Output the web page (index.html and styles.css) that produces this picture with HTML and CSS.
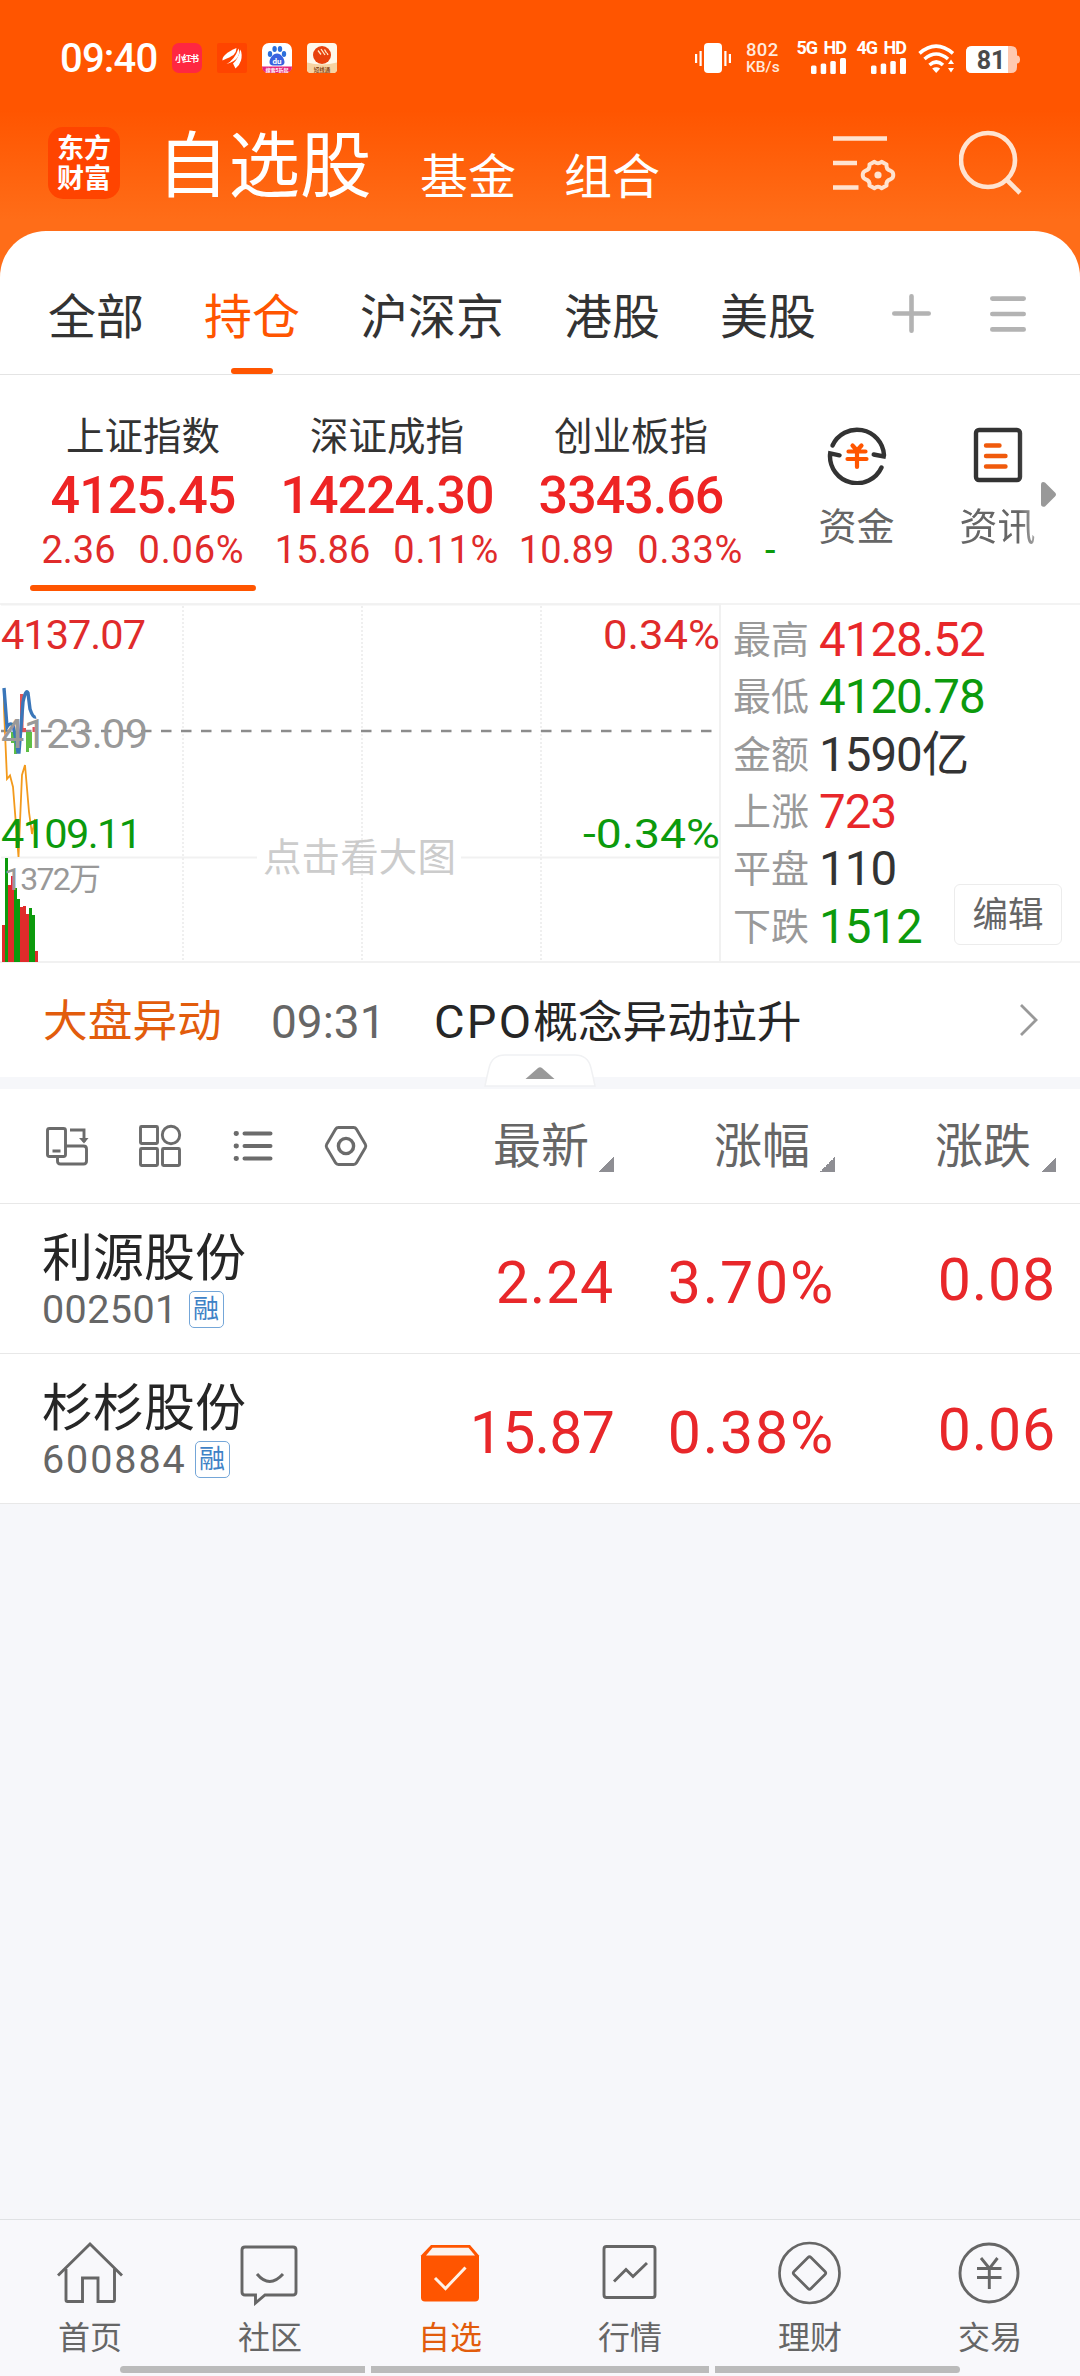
FILE: index.html
```html
<!DOCTYPE html>
<html lang="zh-CN">
<head>
<meta charset="utf-8">
<title>自选股</title>
<link rel="stylesheet" href="styles.css">
</head>
<body>
<div class="app">
  <header class="top">
    <div class="status">
      <span class="clock">09:40</span>
      <svg class="app-icons" width="165" height="30" viewBox="0 0 165 30">
        <rect width="30" height="30" rx="7" fill="#ff2741"/>
        <text x="15" y="19" font-size="9" font-weight="700" fill="#fff" text-anchor="middle" textLength="24">小红书</text>
        <rect x="45" width="30" height="30" rx="2" fill="#ff4400"/>
        <g fill="#fff"><path d="M50.500 17.500q-1-6 14-12.500 0 4-3 7-3 2-11 5.500z"/><path d="M54.500 21q8-4 12-15.500 2 4-1 9-3 4-11 6.500z"/><path d="M63.500 25.500l-2.500-5q5-4 7.500-14 2 5 .500 11-1 4-5.500 8z"/></g>
        <rect x="90" width="30" height="30" rx="7" fill="#fff"/>
        <path d="M90 23.500h30q0 6.500-7 6.500h-16q-7 0-7-6.500z" fill="#e5267a"/>
        <g fill="#2b6fdb"><ellipse cx="98" cy="11" rx="2.200" ry="3"/><ellipse cx="102.600" cy="6" rx="2.200" ry="3"/><ellipse cx="108" cy="6" rx="2.200" ry="3"/><ellipse cx="112" cy="11" rx="2.200" ry="3"/><path d="M105 10.500c4 0 7.500 5 7.500 8.500 0 4-4 3.500-7.500 3.500s-7.500.500-7.500-3.500c0-3.500 3.500-8.500 7.500-8.500z" fill="#3a62e0"/></g>
        <text x="105" y="20.500" font-size="8" font-weight="700" fill="#fff" text-anchor="middle">du</text>
        <text x="105" y="28.800" font-size="5" font-weight="700" fill="#fff" text-anchor="middle" textLength="23">搜索5折起</text>
        <rect x="135" width="30" height="30" rx="4" fill="#fff8ea"/>
        <path d="M135 19.500q15 4 30 0v6.500q0 4-4 4h-22q-4 0-4-4z" fill="#f6d3a2"/>
        <circle cx="150" cy="12" r="9" fill="#e8410c"/>
        <path d="M146 7.500l3 4M149 6l4 6M152.500 6.500l2 3.500M155 10l1 2" stroke="#ffe9c8" stroke-width="1.300" fill="none"/>
        <text x="150" y="28.500" font-size="5.500" font-weight="700" fill="#8a4a1c" text-anchor="middle">短线通</text>
      </svg>
      <div class="status-right">
        <svg class="vib" width="36" height="30" viewBox="0 0 36 30" fill="#fff"><rect x="9" width="18" height="30" rx="4"/><rect y="11" width="2.200" height="9"/><rect x="4.500" y="8" width="2.200" height="15"/><rect x="29.300" y="8" width="2.200" height="15"/><rect x="33.800" y="11" width="2.200" height="9"/></svg>
        <div class="speed"><span class="speed-n">802</span><span class="speed-u">KB/s</span></div>
        <div class="sim"><span class="sim-t">5G HD</span><svg width="35" height="16" viewBox="0 0 35 16" fill="#fff"><rect y="7.500" width="5.500" height="8.500" rx="1.500"/><rect x="9.700" y="5.500" width="5.500" height="10.500" rx="1.500"/><rect x="19.300" y="3" width="5.500" height="13" rx="1.500"/><rect x="29" width="6" height="16" rx="1.500"/></svg></div>
        <div class="sim"><span class="sim-t">4G HD</span><svg width="35" height="16" viewBox="0 0 35 16" fill="#fff"><rect y="7.500" width="5.500" height="8.500" rx="1.500"/><rect x="9.700" y="5.500" width="5.500" height="10.500" rx="1.500"/><rect x="19.300" y="3" width="5.500" height="13" rx="1.500"/><rect x="29" width="6" height="16" rx="1.500"/></svg></div>
        <svg class="wifi" width="37" height="29" viewBox="0 0 37 29" fill="none" stroke="#fff" stroke-width="3.600"><path d="M1.500 9.300q16.500-14.500 33.500 0"/><path d="M6.500 15q11.800-10 23.500 0"/><path d="M11.500 21q6.800-6 13.500 0"/><path d="M18.200 29l-4-4.500q4-2.500 8 0z" fill="#fff" stroke="none"/><path d="M33 15.500l3 4.500h-6zM33 28.500l3-4.500h-6z" fill="#fff" stroke="none"/></svg>
        <svg class="batt" width="54" height="27" viewBox="0 0 54 27"><path d="M6 0h39q6 0 6 6v3.500q3 0 3 4t-3 4v3.500q0 6-6 6h-39q-6 0-6-6v-15q0-6 6-6z" fill="#ffc9b0"/><path d="M6 0h36v27h-36q-6 0-6-6v-15q0-6 6-6z" fill="#fff"/><text x="25" y="22.500" font-size="25" font-weight="700" fill="#4a4a4a" text-anchor="middle">81</text></svg>
      </div>
    </div>
    <div class="titlebar">
      <div class="logo"><span>东方</span><span>财富</span></div>
      <h1 class="title">自选股</h1>
      <span class="alt">基金</span>
      <span class="alt">组合</span>
      <svg class="ic-set" width="64" height="66" viewBox="0 0 64 66" fill="none" stroke="#ffe3d0" stroke-width="4.600"><path d="M0 8.500h54M0 33h24M0 57.500h25.500"/><path d="M41 30.200q4 3.400 8 0l5.500 3.200q-.800 5.500 4.500 6.900 3 1.200 3 4.700t-3 4.700q-5.300 1.400-4.500 6.900l-5.500 3.200q-4-3.400-8 0l-5.500-3.200q.800-5.500-4.500-6.900-3-1.200-3-4.700t3-4.700q5.300-1.400 4.500-6.900z" transform="translate(4.500 4.500) scale(.9)" stroke-width="4.400" stroke-linejoin="round"/><circle cx="45" cy="45" r="3.600" fill="#ffe3d0" stroke="none"/></svg>
      <svg class="ic-search" width="64" height="66" viewBox="0 0 64 66" fill="none" stroke="#ffe3d0" stroke-width="4.600"><circle cx="29" cy="31" r="27"/><path d="M48 51l13 13"/></svg>
    </div>
  </header>

  <main class="sheet">
    <nav class="tabs">
      <span class="tab">全部</span><span class="tab tab-on">持仓</span><span class="tab">沪深京</span><span class="tab">港股</span><span class="tab">美股</span>
      <svg class="ic-plus" width="39" height="39" viewBox="0 0 39 39" stroke="#b3b3b3" stroke-width="4.600" stroke-linecap="round"><path d="M2.300 19.500h34.400M19.500 2.300v34.400"/></svg>
      <svg class="ic-menu" width="36" height="36" viewBox="0 0 36 36" stroke="#b3b3b3" stroke-width="4.600" stroke-linecap="round"><path d="M2.300 2.600h31.400M2.300 18h31.400M2.300 33.400h31.400"/></svg>
    </nav>

    <section class="indices">
      <div class="idx idx-on"><span class="idx-name">上证指数</span><span class="idx-val">4125.45</span><span class="idx-sub"><i>2.36</i><i>0.06%</i></span></div>
      <div class="idx"><span class="idx-name">深证成指</span><span class="idx-val">14224.30</span><span class="idx-sub"><i>15.86</i><i>0.11%</i></span></div>
      <div class="idx"><span class="idx-name">创业板指</span><span class="idx-val">3343.66</span><span class="idx-sub"><i>10.89</i><i>0.33%</i></span></div>
      <span class="idx-next">-</span>
      <div class="quick">
        <svg width="60" height="60" viewBox="0 0 60 60" fill="none" stroke="#333" stroke-width="4.400" stroke-linejoin="miter"><path d="M5.500 20.500a27 27 0 0 1 51.500 9.500l-.300 1.500-10-2"  stroke-linecap="round"/><path d="M54.500 42.500a27 27 0 0 1-51.500-12.500l.200-1.600 9.300 1.900" stroke-linecap="round"/><path d="M25.500 20.500l4.500 5 4.500-5M21.500 26.500h17M20.500 34h19M30 26v16" stroke="#ff5500" stroke-width="4.200" stroke-linecap="round"/></svg>
        <span>资金</span>
      </div>
      <div class="quick quick-last">
        <svg width="60" height="60" viewBox="0 0 60 60" fill="none" stroke="#333" stroke-width="4.400"><rect x="8" y="5" width="44" height="50" rx="3"/><path d="M18 20.500h13.500M18 31h19.500M18 41.500h19.500" stroke="#f05a0c" stroke-linecap="round"/></svg>
        <span>资讯</span>
      </div>
      <svg class="ic-more" width="15" height="25" viewBox="0 0 15 25"><path d="M0 3q0-4 4-2.500l10 10q2 2 0 4l-10 10q-4 1-4-2.500z" fill="#999"/></svg>
    </section>

    <section class="market">
      <svg class="chart" width="721" height="360" viewBox="0 0 721 360">
        <g stroke="#f1f1f1" stroke-width="2"><path d="M1 1.500h720M1 254.500h256M461 254.500h260M1 359h720M720 1v358"/></g>
        <path d="M183 3v355M362 3v355M541 3v355" stroke="#efefef" stroke-width="2" stroke-dasharray="2 2"/>
        <path d="M1 128h719" stroke="#8c8c8c" stroke-width="2.400" stroke-dasharray="10.500 9.500"/>
        <g fill="#5fbf45"><rect x="11" y="129" width="3" height="11"/><rect x="14" y="129" width="3" height="22"/><rect x="17" y="129" width="3" height="16"/><rect x="26" y="129" width="3" height="20"/><rect x="29" y="129" width="3" height="16"/></g>
        <g fill="#e25555"><rect x="20" y="91" width="3.500" height="38"/><rect x="23" y="125" width="3" height="4"/><rect x="32.500" y="124" width="3" height="5"/></g>
        <path d="M4 86v20l3 70 3-3.500 3 11.500 5.500 70 3.500-82 3-10 4 47 3 22 3-15" fill="none" stroke="#f39a1c" stroke-width="1.800"/>
        <path d="M4 85l3 39q3-5 6-2l2 10 3 17h1l4-50q3-14 5-9l2 16q3 9 6 8" fill="none" stroke="#3a76b9" stroke-width="3.400"/>
        <g fill="#e02b2b"><rect x="2" y="322" width="3" height="37"/><rect x="8" y="282" width="3" height="77"/><rect x="11" y="273" width="3" height="86"/><rect x="20" y="304" width="3" height="55"/><rect x="23" y="303" width="3" height="56"/><rect x="26" y="311" width="3" height="48"/><rect x="35" y="348" width="3" height="11"/></g>
        <g fill="#0c9a0c"><rect x="5" y="255" width="3" height="104"/><rect x="14" y="285" width="3" height="74"/><rect x="17" y="296" width="3" height="63"/><rect x="29" y="305" width="3" height="54"/><rect x="32" y="312" width="3" height="47"/></g>
        <g font-size="41.500">
          <text x="1" y="46" fill="#e02b2b" textLength="145">4137.07</text>
          <text x="1" y="144.500" fill="#999" textLength="147">4123.09</text>
          <text x="1" y="245" fill="#0c9a0c" textLength="141">4109.11</text>
          <text x="603" y="46" fill="#e02b2b" textLength="117" lengthAdjust="spacingAndGlyphs">0.34%</text>
          <text x="583" y="245" fill="#0c9a0c" textLength="137" lengthAdjust="spacingAndGlyphs">-0.34%</text>
        </g>
        <text x="4" y="287" font-size="32" fill="#999" textLength="97">1372万</text>
        <text x="263" y="268" font-size="38.500" fill="#ccc" textLength="193">点击看大图</text>
      </svg>
      <dl class="stats">
        <dt>最高</dt><dd class="up">4128.52</dd>
        <dt>最低</dt><dd class="down">4120.78</dd>
        <dt>金额</dt><dd>1590亿</dd>
        <dt>上涨</dt><dd class="up">723</dd>
        <dt>平盘</dt><dd>110</dd>
        <dt>下跌</dt><dd class="down">1512</dd>
      </dl>
      <button class="edit">编辑</button>
    </section>

    <section class="news">
      <span class="news-tag">大盘异动</span><span class="news-time">09:31</span><span class="news-text"><i>CPO</i>概念异动拉升</span>
      <svg class="chev" width="20" height="34" viewBox="0 0 20 34" fill="none" stroke="#999" stroke-width="2.800"><path d="M2 2l15 15-15 15"/></svg>
    </section>
    <div class="band">
      <svg class="fold" width="112" height="33" viewBox="0 0 112 33"><path d="M1 32q2-10 4-18 3-13 16-13h70q13 0 16 13 2 8 4 18z" fill="#fff" stroke="#f0f1f3" stroke-width="1.500"/><path d="M41.500 25l12.500-11q2-1.500 4 0l12.500 11z" fill="#999"/></svg>
    </div>

    <div class="cols">
      <div class="tools">
        <svg width="44" height="44" viewBox="0 0 44 44" fill="none" stroke="#6b6b6b" stroke-width="2.900"><rect x="2.500" y="4.500" width="18" height="28" rx="2"/><path d="M7.500 27h8M25 6h14v12M20.500 22h18q3 0 3 3v12q0 3-3 3h-23q-3 0-3-3v-4"/><path d="M34 14l5 5.500 4.500-5.500z" fill="#6b6b6b" stroke="none"/></svg>
        <svg width="44" height="44" viewBox="0 0 44 44" fill="none" stroke="#6b6b6b" stroke-width="2.900"><rect x="2.500" y="2.500" width="17" height="17" rx="1"/><circle cx="33" cy="11" r="8.700"/><rect x="2.500" y="24.500" width="17" height="17" rx="1"/><rect x="24.500" y="24.500" width="17" height="17" rx="1"/></svg>
        <svg width="44" height="44" viewBox="0 0 44 44" fill="none" stroke="#6b6b6b" stroke-width="4" stroke-linecap="round"><path d="M13.500 9.500h26M13.500 22h26M13.500 34.500h26"/><path d="M5 9.500h.5M5 22h.5M5 34.500h.5" stroke-width="4.800"/></svg>
        <svg width="44" height="44" viewBox="0 0 44 44" fill="none" stroke="#6b6b6b" stroke-width="2.900"><path d="M14.500 3.500h15q2 0 3 1.700l8.800 15q1 1.800 0 3.600l-8.800 15q-1 1.700-3 1.700h-15q-2 0-3-1.700l-8.800-15q-1-1.800 0-3.600l8.800-15q1-1.700 3-1.700z"/><circle cx="22" cy="22" r="7.600" stroke-width="3.400"/></svg>
      </div>
      <span class="col">最新<b></b></span><span class="col">涨幅<b></b></span><span class="col">涨跌<b></b></span>
    </div>

    <div class="stock">
      <div class="who"><span class="name">利源股份</span><span class="code">002501<em>融</em></span></div>
      <span class="num">2.24</span><span class="num num-pct">3.70%</span><span class="num num-diff">0.08</span>
    </div>
    <div class="stock">
      <div class="who"><span class="name">杉杉股份</span><span class="code code-wide">600884<em>融</em></span></div>
      <span class="num num-long">15.87</span><span class="num num-pct">0.38%</span><span class="num num-diff">0.06</span>
    </div>
  </main>

  <footer class="nav">
    <div class="items">
      <div class="item"><svg width="66" height="66" viewBox="0 0 66 66" fill="none" stroke="#666" stroke-width="2.900"><path d="M1 35.500l32-31.500 32 31.500"/><path d="M9 29v31q0 1.500 1.500 1.500h15v-23.500h15.500v23.500h15q1.500 0 1.500-1.500v-31"/></svg><span>首页</span></div>
      <div class="item"><svg width="66" height="66" viewBox="0 0 66 66" fill="none" stroke="#666" stroke-width="2.900"><path d="M8 7h48q3 0 3 3v42q0 3-3 3h-28l-9.500 8v-8h-10.500q-3 0-3-3v-42q0-3 3-3z"/><path d="M20 34q12.500 15 26 0"/></svg><span>社区</span></div>
      <div class="item item-on"><svg width="66" height="66" viewBox="0 0 66 66"><path d="M14 5h39l9 10.500v42q0 4-4 4h-50q-4 0-4-4v-42z" fill="#ff5500"/><path d="M15.500 7.800h36l6.500 7.700h-49z" fill="#fbf3ef"/><path d="M18 38l10.500 10.500 20-21" fill="none" stroke="#fff1e6" stroke-width="3"/></svg><span>自选</span></div>
      <div class="item"><svg width="66" height="66" viewBox="0 0 66 66" fill="none" stroke="#666" stroke-width="2.900"><rect x="7" y="6.500" width="51" height="51" rx="2.500"/><path d="M17 41.500l12-12 7 7 14-13.500"/></svg><span>行情</span></div>
      <div class="item"><svg width="66" height="66" viewBox="0 0 66 66" fill="none" stroke="#666" stroke-width="2.700"><circle cx="32.500" cy="33" r="30"/><path d="M31 17.500q1.500-1.500 3 0l14 14q1.500 1.500 0 3l-14 14q-1.500 1.500-3 0l-14-14q-1.500-1.500 0-3z"/></svg><span>理财</span></div>
      <div class="item"><svg width="66" height="66" viewBox="0 0 66 66" fill="none" stroke="#666" stroke-width="2.900"><circle cx="32" cy="33" r="29"/><path d="M24 18l8.500 10.500 8-10.500M20 28.500h24.500M20 37.500h24.500M32.300 28v21"/></svg><span>交易</span></div>
    </div>
    <div class="gesture"><i></i><i class="mid"></i><i></i></div>
  </footer>
</div>
</body>
</html>
```

FILE: styles.css
```css
* { box-sizing: border-box; }
body {
  margin: 0;
  font-family: Roboto, "Noto Sans CJK SC", sans-serif;
  color: #333;
}
i, em { font-style: normal; }
svg { display: block; flex: none; }
span, dt, dd { white-space: nowrap; }

.app {
  width: 1080px;
  height: 2376px;
  display: flex;
  flex-direction: column;
  background: #f6f7fa;
  overflow: hidden;
}

/* header */
.top {
  height: 281px;
  background: linear-gradient(#ff5500 0, #ff5500 110px, #ff6d18 220px);
}
.status { height: 73px; padding: 43px 60px 0 60px; display: flex; }
.clock {
  width: 113px;
  color: #fff;
  font-size: 40px;
  font-weight: 500;
  line-height: 31px;
  letter-spacing: -.8px;
}
.status-right { flex: 1; display: flex; padding-left: 358px; }
.speed {
  width: 34px;
  margin-left: 15px;
  display: flex;
  flex-direction: column;
  gap: 2px;
  color: #ffe9dc;
}
.speed-n { font-size: 18.500px; line-height: 15px; letter-spacing: .3px; font-weight: 500; }
.speed-u { font-size: 15.500px; line-height: 15px; font-weight: 500; }
.sim {
  width: 50px;
  margin: -3px 0 0 16px;
  display: flex;
  flex-direction: column;
  align-items: flex-end;
  gap: 3px;
}
.sim + .sim { margin-left: 10px; }
.sim-t { color: #fff; font-size: 18px; font-weight: 700; line-height: 15px; letter-spacing: -1px; word-spacing: 3px; }
.wifi { margin: 1px 0 0 12px; }
.batt { margin: 3px 0 0 11px; }

.titlebar { height: 158px; padding: 54px 0 0 48px; display: flex; }
.logo {
  width: 72px;
  height: 72px;
  border-radius: 15px;
  background: #ff4400;
  color: #fff;
  font-size: 27px;
  font-weight: 700;
  line-height: 30px;
  display: flex;
  flex-direction: column;
  align-items: center;
  padding-top: 7px;
}
.title {
  margin: 0 0 0 37px;
  width: 221px;
  color: #fff;
  font-size: 71.500px;
  font-weight: 400;
  line-height: 80px;
}
.alt {
  width: 144px;
  margin-left: 42px;
  margin-right: -42px;
  color: #fff;
  font-size: 48px;
  line-height: 101px;
}
.ic-set { margin: 3px 0 0 167px; }
.ic-search { margin: 2px 0 0 62px; }

/* white sheet */
.sheet {
  position: relative;
  margin-top: -50px;
  background: #fff;
  border-radius: 46px 46px 0 0;
}
.tabs {
  height: 144px;
  padding: 0 54px 0 48px;
  display: flex;
  align-items: center;
  gap: 60px;
  border-bottom: 1px solid #e4e4e4;
}
.tab { position: relative; font-size: 48px; line-height: 60px; padding-top: 29px; height: 88px; }
.tab-on { color: #ff5500; }
.tab-on::after {
  content: "";
  position: absolute;
  left: 27px;
  bottom: -27px;
  width: 42px;
  height: 6px;
  border-radius: 3px;
  background: #ff5500;
}
.ic-plus { margin: 22px 0 0 16px; }
.ic-menu { margin: 22px 0 0 -1px; }

.indices { height: 228px; padding-left: 21px; display: flex; }
.idx {
  position: relative;
  width: 244px;
  display: flex;
  flex-direction: column;
  align-items: center;
}
.idx-on::after {
  content: "";
  position: absolute;
  left: 9px;
  top: 210px;
  width: 226px;
  height: 6px;
  border-radius: 3px;
  background: #ff5500;
}
.idx-name { margin-top: 36px; font-size: 38.500px; line-height: 52px; }
.idx-val { color: #ee2424; font-size: 52px; font-weight: 500; line-height: 64px; letter-spacing: -1px; margin-top: 1px; }
.idx-sub { display: flex; gap: 23px; color: #e02b2b; font-size: 38px; line-height: 38px; margin-top: 3px; }
.idx-sub i:last-child { letter-spacing: .8px; }
.idx-next { width: 33px; padding-left: 12px; padding-top: 156px; font-size: 38px; line-height: 38px; color: #0c9a0c; }
.quick {
  flex: none;
  width: 141px;
  padding-top: 50px;
  display: flex;
  flex-direction: column;
  align-items: center;
  color: #666;
  font-size: 38px;
}
.quick span { line-height: 50px; margin-top: 17px; }
.quick-last { -webkit-mask-image: linear-gradient(90deg, #000 92px, rgba(0,0,0,.5) 112px); mask-image: linear-gradient(90deg, #000 92px, rgba(0,0,0,.5) 112px); }
.ic-more { margin: 107px 0 0 -27px; }

.market { position: relative; height: 360px; display: flex; border-bottom: 2px solid #f1f1f1; border-top: 2px solid #f3f3f3; }
.chart { margin-top: -2px; }
.stats {
  margin: 7px 0 0 12px;
  display: grid;
  grid-template-columns: 86px auto;
  grid-auto-rows: 57.300px;
  align-items: center;
}
.stats dt { color: #999; font-size: 38px; line-height: 57px; }
.stats dd { margin: 0; font-size: 47.500px; line-height: 57px; letter-spacing: -1px; }
.stats .up { color: #e8272a; }
.stats .down { color: #0c9a0c; }
.edit {
  position: absolute;
  left: 954px;
  top: 279px;
  width: 108px;
  height: 61px;
  padding: 0;
  border: 1px solid #ececec;
  border-radius: 6px;
  background: #fff;
  color: #666;
  font: 35.500px/58px Roboto, "Noto Sans CJK SC", sans-serif;
}

.news { height: 114px; padding: 4px 41px 0 43px; display: flex; align-items: center; font-size: 44.700px; line-height: 60px; }
.news-tag { width: 228px; color: #e25c0c; }
.news-time { width: 163px; color: #666; font-size: 46px; }
.news-text { flex: 1; color: #262626; }
.news-text i { font-size: 47px; letter-spacing: 2.200px; }
.chev { margin-top: -4px; }
.band { height: 12px; background: #f6f7fa; }
.fold { position: absolute; left: 484px; top: 823px; }

.cols { height: 115px; display: flex; align-items: center; border-bottom: 1px solid #e8e8e8; }
.tools { width: 393px; padding-left: 45px; display: flex; gap: 49px; }
.col { width: 221px; display: flex; justify-content: flex-end; align-items: flex-end; gap: 10px; color: #666; font-size: 48px; line-height: 60px; padding-top: 2px; }
.col b { width: 15px; height: 15px; margin-bottom: 5px; background: linear-gradient(135deg, transparent 50%, #8e8e93 50%); }

.stock { height: 150px; display: flex; border-bottom: 1px solid #e8e8e8; }
.who { width: 393px; padding: 22px 0 0 42px; display: flex; flex-direction: column; color: #262626; }
.name { font-size: 51px; line-height: 65px; }
.code { display: flex; gap: 11px; color: #666; font-size: 39.500px; line-height: 38px; letter-spacing: .4px; }
.code-wide { gap: 8px; letter-spacing: 1.900px; }
.code em {
  width: 35px;
  height: 37px;
  border: 1.500px solid #74a6d8;
  border-radius: 5px;
  color: #3f82c6;
  font-size: 26px;
  line-height: 34px;
  letter-spacing: 0;
  text-align: center;
}
.num { width: 221px; text-align: right; color: #e8272a; font-size: 59px; line-height: 158px; letter-spacing: .8px; }
.num-long { letter-spacing: -.8px; }
.num-pct { letter-spacing: 1.800px; }
.num-diff { line-height: 152px; }

/* bottom navigation */
.nav { margin-top: auto; height: 157px; background: #f8f8fb; border-top: 1px solid #e0e2e4; }
.items { display: flex; height: 146px; padding-top: 20px; }
.item { width: 180px; display: flex; flex-direction: column; align-items: center; color: #666; font-size: 32px; line-height: 40px; gap: 12px; }
.item-on { color: #e25c0c; }
.gesture { display: flex; justify-content: center; gap: 6px; }
.gesture i { width: 245px; height: 7px; background: #bbb; border-radius: 4px 0 0 4px; }
.gesture .mid { width: 338px; border-radius: 0; }
.gesture i:last-child { border-radius: 0 4px 4px 0; }
```
